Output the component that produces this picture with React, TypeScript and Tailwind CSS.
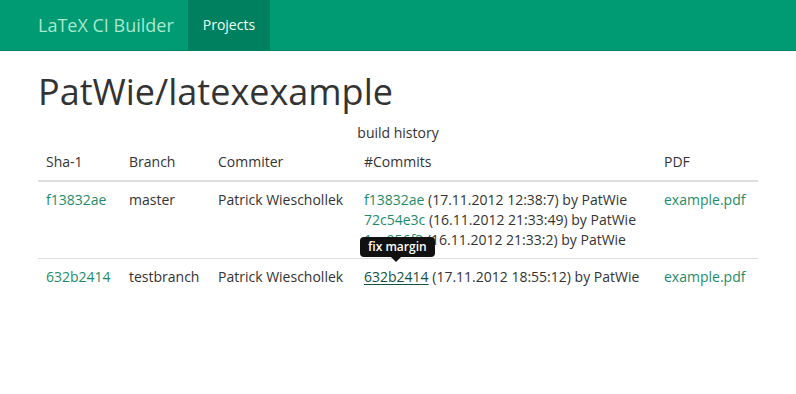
import React from "react";

const link = "text-[#1e8c6b]";

export default function App() {
  return (
    <div className="min-h-[394px] bg-white text-[14px] leading-[20px] text-[#333]" style={{ fontFamily: '"Open Sans", sans-serif' }}>
      <nav className="h-[51px] border-b border-[#00805c] bg-[#009a73]">
        <div className="mx-auto flex h-[50px] w-[750px] px-[15px]">
          <div className="flex h-[50px] items-center pr-[14px] text-[18px] text-[#a8e8cf]">LaTeX CI Builder</div>
          <div className="flex h-[50px] items-center bg-[#00805f] px-[15px] text-[14px] font-medium text-[#effff8]">Projects</div>
        </div>
      </nav>
      <div className="mx-auto w-[750px] px-[15px]">
        <h1 className="mt-[21px] mb-[9px] text-[36px] leading-[40px] font-normal">PatWie/latexexample</h1>
        <table className="w-full border-collapse">
          <caption className="pt-[2px] pb-[1px] text-center text-[14px] leading-[20px] text-[#333]">build history</caption>
          <thead>
            <tr className="border-b-2 border-[#ddd] text-left">
              <th className="w-[83px] p-[8px] font-normal">Sha-1</th>
              <th className="w-[89px] p-[8px] font-normal">Branch</th>
              <th className="w-[146px] p-[8px] font-normal">Commiter</th>
              <th className="w-[300px] p-[8px] font-normal">#Commits</th>
              <th className="p-[8px] font-normal">PDF</th>
            </tr>
          </thead>
          <tbody>
            <tr className="border-b border-[#ddd] align-top">
              <td className={`p-[8px] ${link}`}>f13832ae</td>
              <td className="p-[8px]">master</td>
              <td className="p-[8px]">Patrick Wieschollek</td>
              <td className="p-[8px]">
                <div><span className={link}>f13832ae</span> (17.11.2012 12:38:7) by PatWie</div>
                <div><span className={link}>72c54e3c</span> (16.11.2012 21:33:49) by PatWie</div>
                <div><span className={link}>1ce956f3</span> (16.11.2012 21:33:2) by PatWie</div>
              </td>
              <td className={`p-[8px] ${link}`}>example.pdf</td>
            </tr>
            <tr className="align-top">
              <td className={`p-[8px] ${link}`}>632b2414</td>
              <td className="p-[8px]">testbranch</td>
              <td className="p-[8px]">Patrick Wieschollek</td>
              <td className="p-[8px]">
                <div className="relative">
                  <span className="relative text-[#13523f] underline underline-offset-[2px]">
                    632b2414
                    <span className="absolute bottom-[29px] left-[-4px] whitespace-nowrap">
                      <span className="block rounded-[4px] bg-[#111] px-[8px] py-[3px] text-[12px] leading-[14px] font-semibold text-white no-underline">fix margin</span>
                      <span className="absolute left-[31px] top-full h-0 w-0 border-x-[5px] border-t-[5px] border-x-transparent border-t-[#111]"></span>
                    </span>
                  </span>{" "}
                  (17.11.2012 18:55:12) by PatWie
                </div>
              </td>
              <td className={`p-[8px] ${link}`}>example.pdf</td>
            </tr>
          </tbody>
        </table>
      </div>
    </div>
  );
}
